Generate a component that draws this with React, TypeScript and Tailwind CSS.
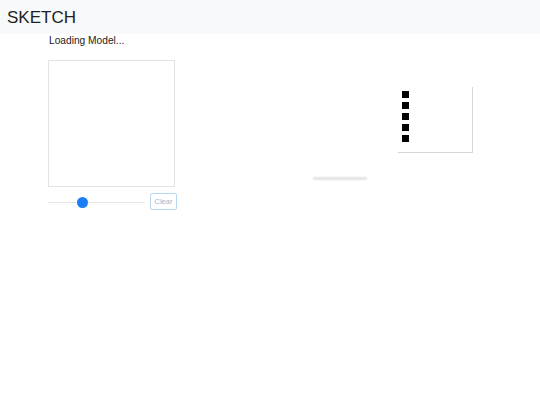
import React from "react";

const Slider = () => {
  return (
    <div className="relative h-[17px] w-[97px]">
      <div className="absolute left-0 right-0 top-[9px] h-px bg-[#e6e6e6]" />
      <div className="absolute left-[29px] top-[4px] h-[11px] w-[11px] rounded-full bg-[#1a7ff5]" />
    </div>
  );
};

export default function App() {
  return (
    <div className="min-h-[405px] bg-white font-['Liberation_Sans',Arial,sans-serif] text-[#222]">
      <header className="flex h-[34px] items-center bg-[#f8f9fa] px-[7px]">
        <span className="text-[17px] leading-none text-[#222]">SKETCH</span>
      </header>

      <div className="pl-12">
        <div className="pl-px text-[10.2px] leading-[14px] text-[#222]">
          Loading Model...
        </div>

        <div className="mt-[12px] flex items-start">
          {/* drawing canvas + controls */}
          <div className="flex w-[129px] flex-col">
            <div className="h-[127px] w-[127px] border border-[#e3e3e3] bg-white" />
            <div className="mt-[6px] flex items-center gap-[5px]">
              <Slider />
              <button className="flex h-[17px] w-[27px] items-center justify-center rounded-[2px] border border-[#b9d6f3] bg-white text-[7.5px] text-[#9fb6cc]">
                Clear
              </button>
            </div>
          </div>

          {/* loading bar */}
          <div className="ml-[136px] mt-[117px] h-[3px] w-[54px] rounded-full bg-[#e8e8e8] shadow-[0_0_2px_#e8e8e8]" />

          {/* predictions */}
          <div className="ml-[30px] mt-[26px] flex h-[66px] w-[75px] flex-col gap-[4px] pl-[5px] pt-[5px] shadow-[1px_1px_0_#d6d6d6]">
            <div className="h-[7px] w-[7px] bg-black" />
            <div className="h-[7px] w-[7px] bg-black" />
            <div className="h-[7px] w-[7px] bg-black" />
            <div className="h-[7px] w-[7px] bg-black" />
            <div className="h-[7px] w-[7px] bg-black" />
          </div>
        </div>
      </div>
    </div>
  );
}
